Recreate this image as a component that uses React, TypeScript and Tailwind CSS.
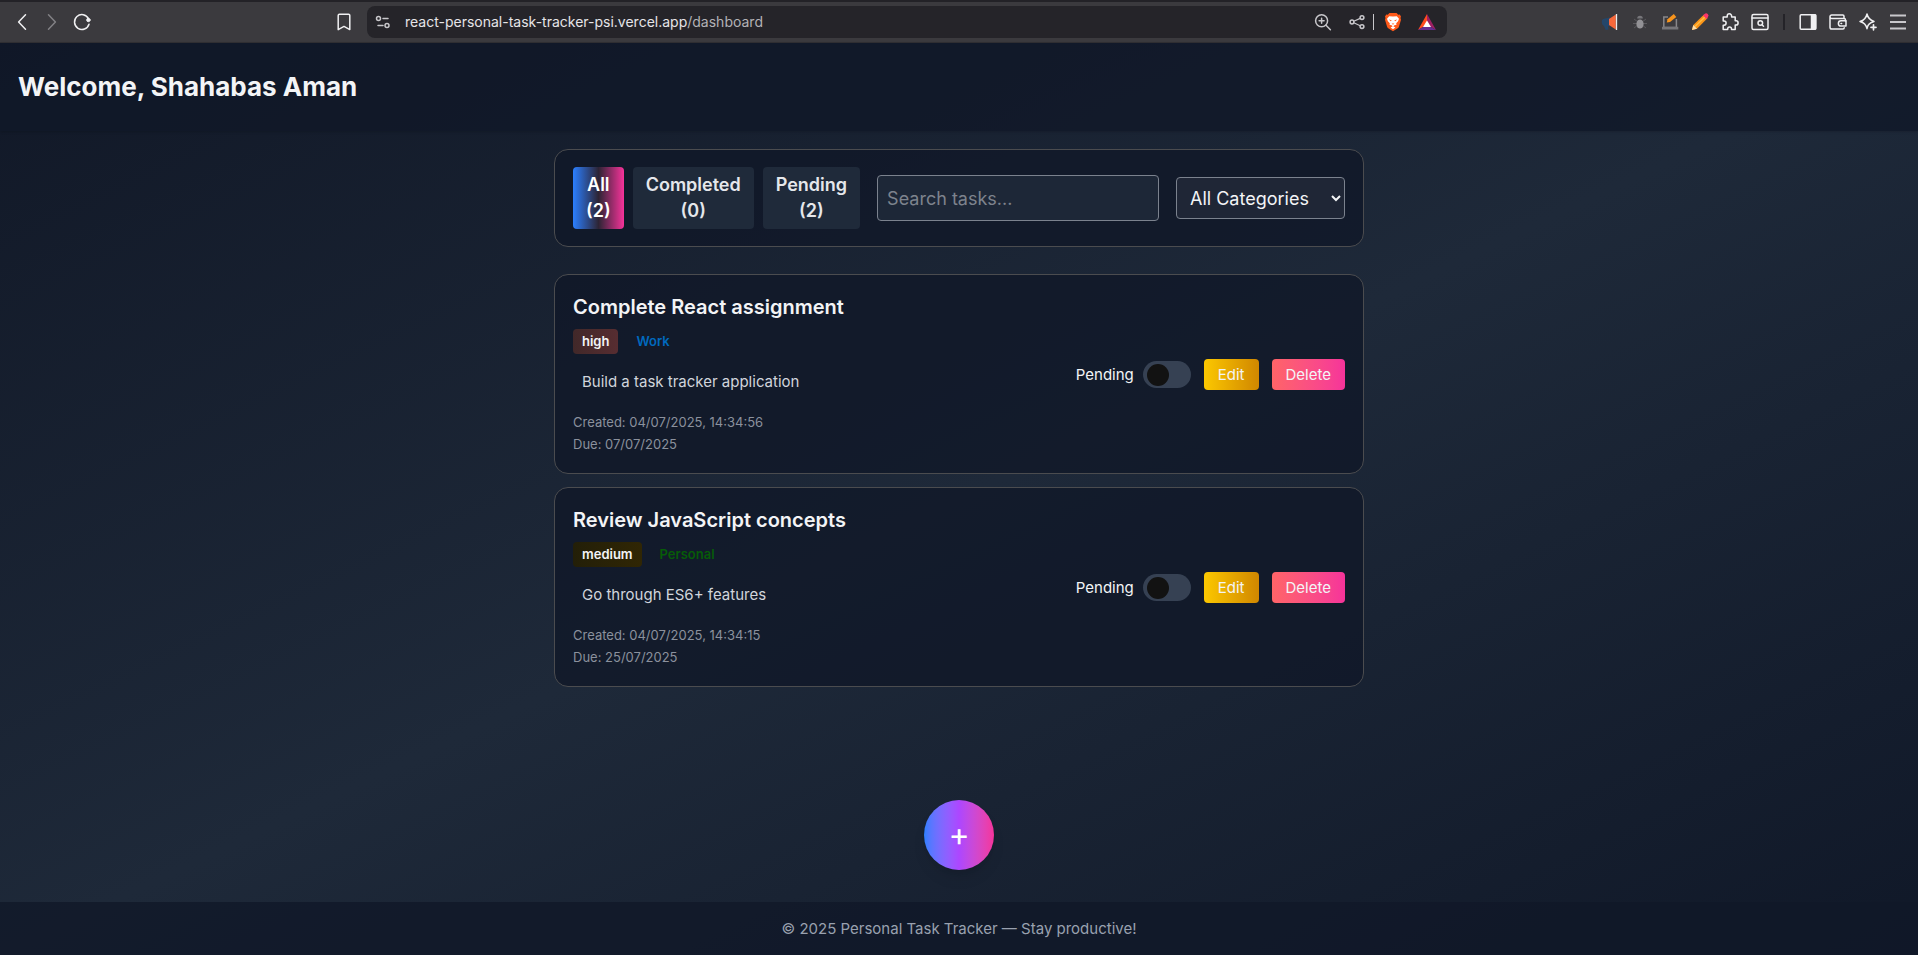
import { useState, type ReactNode } from "react";

type Task = {
  title: string;
  priority: string;
  priorityClass: string;
  category: string;
  categoryClass: string;
  description: string;
  created: string;
  due: string;
};

const TASKS: Task[] = [
  {
    title: "Complete React assignment",
    priority: "high",
    priorityClass: "bg-linear-to-r from-[#412829] to-[#572d31]",
    category: "Work",
    categoryClass: "text-[#0069be]",
    description: "Build a task tracker application",
    created: "04/07/2025, 14:34:56",
    due: "07/07/2025",
  },
  {
    title: "Review JavaScript concepts",
    priority: "medium",
    priorityClass: "bg-linear-to-r from-[#231f08] to-[#302604]",
    category: "Personal",
    categoryClass: "text-[#065c08]",
    description: "Go through ES6+ features",
    created: "04/07/2025, 14:34:15",
    due: "25/07/2025",
  },
];

function IconButton({ label, children }: { label: string; children: ReactNode }) {
  return (
    <button type="button" aria-label={label} className="flex size-5 shrink-0 items-center justify-center">
      {children}
    </button>
  );
}

function Stroke({ children, className = "text-[#f0f0f2]" }: { children: ReactNode; className?: string }) {
  return (
    <svg viewBox="0 0 20 20" className={`size-5 ${className}`} fill="none" stroke="currentColor" strokeWidth="1.5" strokeLinecap="round" strokeLinejoin="round">
      {children}
    </svg>
  );
}

function BrowserBar() {
  return (
    <div className="flex h-[43px] shrink-0 items-center border-t-2 border-b border-t-[#232227] border-b-[#302f33] bg-[#3b3a3e] pr-2.5 pl-3">
      <div className="flex gap-2.5">
        <IconButton label="Back">
          <Stroke><path d="M13.5 2.8 6.6 10l6.900 7.200" /></Stroke>
        </IconButton>
        <IconButton label="Forward">
          <Stroke className="text-[#828185]"><path d="m6.500 2.800 6.900 7.200-6.900 7.200" /></Stroke>
        </IconButton>
        <IconButton label="Reload">
          <Stroke>
            <path d="M17 12.200A7.400 7.400 0 1 1 16.500 6.600" />
            <circle cx="16.400" cy="8" r="1.700" fill="currentColor" strokeWidth="1" />
          </Stroke>
        </IconButton>
      </div>
      <div className="ml-[242px] flex">
        <IconButton label="Bookmark">
          <Stroke><path d="M5.400 2.200h9.200a1.200 1.200 0 0 1 1.200 1.200v14.200L10 14.400l-5.800 3.200V3.400a1.200 1.200 0 0 1 1.200-1.200Z" /></Stroke>
        </IconButton>
      </div>
      <div className="ml-[13px] flex h-8 w-[1080px] items-center rounded-lg bg-[#252429] pr-[10px] pl-[6px]">
        <IconButton label="Site settings">
          <Stroke className="text-[#c8c7cb]">
            <circle cx="5.500" cy="6.500" r="2" />
            <path d="M10 6.500h5M5 13.500h5" />
            <circle cx="14" cy="13.500" r="2" />
          </Stroke>
        </IconButton>
        <div className="ml-3 flex-1 text-[14px] leading-5 text-[#e6e5e8]">
          react-personal-task-tracker-psi.vercel.app<span className="text-[#b3b2b6]">/dashboard</span>
        </div>
        <div className="flex items-center">
          <IconButton label="Zoom">
            <Stroke className="text-[#c8c7cb]">
              <circle cx="8.600" cy="8.800" r="6" />
              <path d="m13 13.300 4.400 4.400M8.600 6.300v5M6.100 8.800h5" />
            </Stroke>
          </IconButton>
          <div className="ml-[14px] flex items-center gap-1.5">
            <IconButton label="Share">
              <Stroke className="text-[#c8c7cb]">
                <circle cx="5" cy="10" r="1.900" />
                <circle cx="15" cy="5.600" r="1.900" />
                <circle cx="15" cy="14.600" r="1.900" />
                <path d="m6.800 9.200 6.400-2.800M6.800 10.800l6.400 3" strokeWidth="1.200" />
              </Stroke>
            </IconButton>
            <div className="h-4 w-px bg-[#c8c7cb]" />
          </div>
          <div className="ml-[9px] flex items-center gap-3.5">
            <IconButton label="Shields">
              <svg viewBox="0 0 20 20" className="size-5">
                <path d="M6.400 1h7.200l1.600 1.800 1.500-.2 1.300 2-.5 1.500.5 1.700-2 6.600c-.3 1-.8 1.600-1.600 2.200L10 19.200l-4.400-2.600c-.8-.6-1.300-1.200-1.600-2.200L2 7.800l.5-1.700L2 4.600l1.300-2 1.500.2Z" fill="#ff5a1a" />
                <path d="M6.200 4.200 10 4.600l3.800-.4 2.200 2.600-.9 2.500-1.900 2 .3 1.500-2 .4-1.200 1 2.100 1.300L10 17.200l-2.400-1.700 2.100-1.300-1.200-1-2-.4.3-1.500-1.900-2L4 6.800Z" fill="#fff" />
                <path d="m5.700 7.400 3 .8-.8 1.100Zm8.600 0-3 .8.8 1.100ZM8.600 11.500h2.800L10 12.800Z" fill="#ff5a1a" />
              </svg>
            </IconButton>
            <IconButton label="Rewards">
              <svg viewBox="0 0 20 20" className="size-5">
                <path d="M10 2 1 18l9-5.500Z" fill="#ff4b1f" />
                <path d="M10 2v10.500L19 18Z" fill="#9e1f63" />
                <path d="M1 18h18l-9-5.500Z" fill="#662d91" />
                <path d="m10 8.500 4 6.500H6Z" fill="#fff" />
              </svg>
            </IconButton>
          </div>
        </div>
      </div>
      <div className="ml-auto flex items-center gap-2.5">
        <IconButton label="Announcements">
          <svg viewBox="0 0 20 20" className="size-5">
            <path d="M2 8c1-1.500 4-1.500 8-2.500v8.500l-2 .3.600 3.200-3 .5-1.600-4C2 13 1.500 11 2 8Z" fill="#24466a" />
            <path d="M9 7 15.800 2.500v15L9 13Z" fill="#f9683a" />
            <path d="M16.500 2v16" stroke="#e9ecef" strokeWidth="1.300" />
          </svg>
        </IconButton>
        <IconButton label="Debugger">
          <svg viewBox="0 0 20 20" className="size-5">
            <path d="m4 7 12 9M16 7 4 16M3 11.500h14" stroke="#5a595d" strokeWidth="1" />
            <path d="M7.200 6.600a2.800 2.800 0 0 1 5.600 0Z" fill="#77767a" />
            <ellipse cx="10" cy="12" rx="3.600" ry="4.600" fill="#929195" />
          </svg>
        </IconButton>
        <IconButton label="Page editor">
          <svg viewBox="0 0 20 20" className="size-5">
            <path d="M8 5H3.800v10.500h12.600V7" fill="none" stroke="#88878a" strokeWidth="1.500" />
            <path d="M2 14.800h16.300v2.700H2Z" fill="#77767a" />
            <path d="m6.800 10.600.7-3.400L13.800 2l2.500 3-6.300 5Z" fill="#f7941d" />
          </svg>
        </IconButton>
        <IconButton label="Pencil">
          <svg viewBox="0 0 20 20" className="size-5">
            <path d="m2 18 1.300-5L14 2.500l3.700 3.600L7 16.700Z" fill="#fb9418" />
            <path d="m5 14.500 10.500-10" stroke="#ffbe43" strokeWidth="1.400" />
            <path d="m13 3.500 1.500-1.400a2.200 2.200 0 0 1 3.300 3.200L16.500 7Z" fill="#fb3569" />
            <path d="m2 18 1.300-5L7 16.700Z" fill="#ffe1ad" />
          </svg>
        </IconButton>
        <IconButton label="Extensions">
          <Stroke>
            <path d="M3.200 5h4V4a2.200 2.200 0 0 1 4.400 0v1h3.600v3.800h.8a2.100 2.100 0 0 1 0 4.200h-.8v4.500h-3.700v-.6a1.900 1.900 0 0 0-3.800 0v.6H3.200v-4.300H4a2.100 2.100 0 0 0 0-4.200h-.8Z" />
          </Stroke>
        </IconButton>
        <IconButton label="Search tabs">
          <Stroke>
            <rect x="2" y="2.500" width="16" height="15" rx="1.500" />
            <path d="M2 6h16" />
            <circle cx="10.300" cy="11" r="2.300" />
            <path d="m12 12.800 1.500 1.500" />
          </Stroke>
        </IconButton>
        <div className="mx-[3px] h-4 w-[2px] bg-[#242328]" />
        <IconButton label="Sidebar">
          <Stroke>
            <rect x="2.200" y="2.800" width="15.600" height="14.400" rx="1" />
            <path d="M13.500 3h4v14h-4Z" fill="currentColor" />
          </Stroke>
        </IconButton>
        <IconButton label="Wallet">
          <Stroke>
            <path d="M16 6.500V4.200A1.200 1.200 0 0 0 14.800 3H3.800A1.700 1.700 0 0 0 2 4.800v10.400A1.800 1.800 0 0 0 3.800 17H15a1.200 1.200 0 0 0 1.200-1.200M2 4.800a1.700 1.700 0 0 0 1.800 1.700H16A1.500 1.500 0 0 1 17.500 8v1" />
            <path d="M18 8.800h-5a2.600 2.600 0 0 0 0 5.200h5Z" />
            <path d="M13 11.400h.6" />
          </Stroke>
        </IconButton>
        <IconButton label="Assistant">
          <Stroke>
            <path d="M9 2c.9 4.200 2.400 6 7 7.500-2.800.8-4.300 1.600-5.300 3-.9 1.100-1.300 2.300-1.700 4.200-.9-4.300-2.500-6-7-7.200C6.500 8.200 8.100 6.300 9 2Z" />
            <path d="M15.500 12.800v5M13 15.300h5" strokeWidth="1.700" />
          </Stroke>
        </IconButton>
        <IconButton label="Menu">
          <Stroke className="text-[#c9c8cc]"><path d="M2 3.600h16M2 10h16M2 16.400h16" strokeWidth="2" strokeLinecap="butt" /></Stroke>
        </IconButton>
      </div>
    </div>
  );
}

const FILTERS = [
  { name: "All", count: 2 },
  { name: "Completed", count: 0 },
  { name: "Pending", count: 2 },
];

function Toolbar() {
  const [active, setActive] = useState("All");
  return (
    <section className="flex items-center rounded-[14px] border border-[#4b4c4f] bg-gray-900/80 px-[18px] py-[17px]">
      <div className="flex gap-[9px]">
        {FILTERS.map((filter) => (
          <button
            key={filter.name}
            type="button"
            onClick={() => setActive(filter.name)}
            className={`flex flex-col items-center rounded px-[13px] py-[5px] text-[18px] leading-[26px] font-semibold ${
              active === filter.name
                ? "bg-[linear-gradient(to_right,#2b7fff,#2d2434_50%,#f6339a)] text-white"
                : "bg-[#1f2a3a] text-[#e5e7eb]"
            }`}
          >
            <span>{filter.name}</span>
            <span>({filter.count})</span>
          </button>
        ))}
      </div>
      <input
        type="text"
        aria-label="Search tasks"
        placeholder="Search tasks..."
        className="ml-[17px] h-[46px] min-w-0 flex-1 rounded border border-[#7b828e] bg-[#1d2737] px-[9px] text-[18px] text-gray-100 placeholder:text-[#7d838d]"
      />
      <select
        aria-label="Category"
        className="ml-[17px] h-[42px] w-[169px] rounded border border-[#7b828e] bg-[#1f2636] px-[9px] text-[18px] text-gray-100"
      >
        <option>All Categories</option>
        <option>Work</option>
        <option>Personal</option>
      </select>
    </section>
  );
}

function TaskCard({ task }: { task: Task }) {
  const [done, setDone] = useState(false);
  return (
    <li className="flex items-center justify-between rounded-[14px] border border-[#4b4c4f] bg-gray-900/80 p-[18px]">
      <div>
        <h2 className="text-[20px] leading-7 font-semibold text-gray-100">{task.title}</h2>
        <div className="mt-2 flex gap-[9px] text-[13px] leading-[25px] font-semibold">
          <span className={`rounded px-[9px] text-gray-100 ${task.priorityClass}`}>{task.priority}</span>
          <span className={`px-[9px] ${task.categoryClass}`}>{task.category}</span>
        </div>
        <p className="mt-4 px-[9px] text-[15px] leading-6 text-gray-300">{task.description}</p>
        <div className="mt-[17px] text-[13px] leading-[22px] text-[#8b919d]">
          <p>Created: {task.created}</p>
          <p>Due: {task.due}</p>
        </div>
      </div>
      <div className="flex items-center text-[15px] leading-[31px]">
        <label className="flex items-center gap-[9px] text-gray-100">
          {done ? "Completed" : "Pending"}
          <input
            type="checkbox"
            role="switch"
            checked={done}
            onChange={() => setDone(!done)}
            className="h-[27px] w-12 cursor-pointer appearance-none rounded-full bg-[#364153] px-1 py-[3px] before:block before:size-[22px] before:rounded-full before:bg-[#121212] checked:bg-green-600 checked:before:ml-[18px]"
          />
        </label>
        <button type="button" className="ml-[13px] rounded bg-linear-to-r from-[#fcc800] to-[#d08700] px-3.5 text-gray-100">
          Edit
        </button>
        <button type="button" className="ml-[13px] rounded bg-linear-to-r from-[#ff6467] to-[#f6339a] px-3.5 text-gray-100">
          Delete
        </button>
      </div>
    </li>
  );
}

export default function App() {
  return (
    <div className="flex min-h-screen flex-col font-[Inter,sans-serif]">
      <BrowserBar />
      <div className="flex flex-1 flex-col bg-linear-to-br from-[#111827] via-[#1e2939] to-[#101828]">
        <header className="bg-gray-900/80 px-[18px] py-7 shadow-sm">
          <h1 className="text-[26px] leading-8 font-bold text-gray-100">Welcome, Shahabas Aman</h1>
        </header>
        <main className="mx-auto flex w-full max-w-[810px] flex-1 flex-col pt-[18px]">
          <Toolbar />
          <ul className="mt-[27px] flex flex-col gap-[13px]">
            {TASKS.map((task) => (
              <TaskCard key={task.title} task={task} />
            ))}
          </ul>
          <button
            type="button"
            aria-label="Add task"
            className="mx-auto mt-auto mb-8 flex size-[70px] items-center justify-center rounded-full bg-linear-to-r from-[#2b7fff] via-[#ad46ff] to-[#f6339a] text-[32px] leading-none text-white shadow-lg"
          >
            +
          </button>
        </main>
        <footer className="bg-gray-900/80 py-[14px] text-center text-[15px] leading-[25px] text-[#99a1af]">
          © 2025 Personal Task Tracker — Stay productive!
        </footer>
      </div>
    </div>
  );
}
